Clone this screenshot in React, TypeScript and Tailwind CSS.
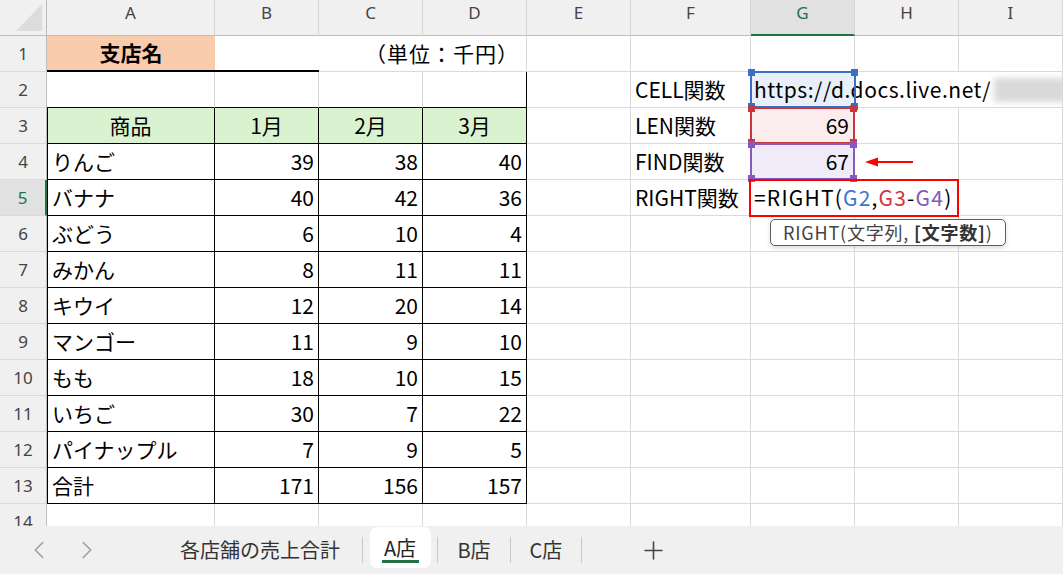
import { ChevronLeft, ChevronRight, Plus } from "lucide-react";

const CJK = "font-['Noto_Sans_CJK_JP',sans-serif]";
const HEAD = "font-['Noto_Sans','Noto_Sans_CJK_JP',sans-serif]";

const cell =
  "flex items-center whitespace-nowrap border-r border-b border-[#dadada] text-[21px] text-black";
const tbl = "border-r-black border-b-black";
const num = "justify-end pr-[4px]";

const fruits: [string, number, number, number][] = [
  ["りんご", 39, 38, 40],
  ["バナナ", 40, 42, 36],
  ["ぶどう", 6, 10, 4],
  ["みかん", 8, 11, 11],
  ["キウイ", 12, 20, 14],
  ["マンゴー", 11, 9, 10],
  ["もも", 18, 10, 15],
  ["いちご", 30, 7, 22],
  ["パイナップル", 7, 9, 5],
  ["合計", 171, 156, 157],
];

const RowHead = ({ n, active }: { n: number; active?: boolean }) => (
  <div
    className={
      active
        ? `${HEAD} flex items-center justify-center border-b border-r-2 border-b-[#dadada] border-r-[#217346] bg-[#e1e1e1] text-[17px] text-[#217346]`
        : `${HEAD} flex items-center justify-center border-b border-r border-b-[#dadada] border-r-[#bdbdbd] bg-[#f0f0f0] text-[17px] text-[#444]`
    }
  >
    {n}
  </div>
);

const RangeBox = ({ border, fill }: { border: string; fill: string }) => (
  <>
    <div className={`pointer-events-none absolute -inset-px border-2 ${border}`} />
    <span className={`absolute -left-[3px] -top-[3px] h-[7px] w-[7px] ${fill}`} />
    <span className={`absolute -right-[3px] -top-[3px] h-[7px] w-[7px] ${fill}`} />
    <span className={`absolute -bottom-[3px] -left-[3px] h-[7px] w-[7px] ${fill}`} />
    <span className={`absolute -bottom-[3px] -right-[3px] h-[7px] w-[7px] ${fill}`} />
  </>
);

const Sep = () => <div className="mt-[11px] h-[26px] w-px bg-[#c8c8c8]" />;

const Labels: Record<number, string> = {
  2: "CELL関数",
  3: "LEN関数",
  4: "FIND関数",
  5: "RIGHT関数",
};

function GCell({ row }: { row: number }) {
  if (row === 2)
    return (
      <div className={`${cell} relative border-r-0 bg-[#e9eff9] pl-[3px]`}>
        <span className="tracking-[0.55px]">https://d.docs.live.net/</span>
        <span className="ml-[3px] inline-block h-[24px] w-[72px] shrink-0 bg-[#d9d9d9] blur-[3px]" />
        <RangeBox border="border-[#3b6fc6]" fill="bg-[#3b6fc6]" />
      </div>
    );
  if (row === 3)
    return (
      <div className={`${cell} relative justify-end bg-[#fbeced] pr-[5px]`}>
        69
        <RangeBox border="border-[#c9363e]" fill="bg-[#c9363e]" />
      </div>
    );
  if (row === 4)
    return (
      <div className={`${cell} relative justify-end bg-[#efebf8] pr-[5px]`}>
        67
        <RangeBox border="border-[#8957c0]" fill="bg-[#8957c0]" />
      </div>
    );
  if (row === 5)
    return (
      <div className={`${cell} relative border-r-0 pl-[3px]`}>
        <span className="tracking-[1.2px]">
          =RIGHT(<span className="text-[#3b73cf]">G2</span>,
          <span className="text-[#d1343d]">G3</span>-
          <span className="text-[#8656c0]">G4</span>)
        </span>
        <div className="pointer-events-none absolute -left-[2px] -top-[1px] h-[38px] w-[210px] border-2 border-[#ff0000]" />
        <div className="absolute left-[19px] top-[39px] flex h-[27px] items-center rounded-[5px] border-[1.5px] border-[#5f5f5f] bg-white px-[12px] text-[18px] tracking-[0.8px] text-[#444] shadow-[0_2px_4px_rgba(0,0,0,0.15)]">
          RIGHT(文字列, <b className="ml-[5px] text-[#333]">[文字数]</b>)
        </div>
      </div>
    );
  return <div className={cell} />;
}

function HCell({ row }: { row: number }) {
  if (row === 2) return <div className={`${cell} border-r-0`} />;
  if (row === 4)
    return (
      <div className={`${cell} pl-[10px]`}>
        <svg width="48" height="12" viewBox="0 0 48 12">
          <path d="M10 6H48" stroke="#ff0000" strokeWidth="2" />
          <path d="M0 6L13 1.5V10.5Z" fill="#ff0000" />
        </svg>
      </div>
    );
  return <div className={cell} />;
}

function RightSide({ row }: { row: number }) {
  return (
    <>
      <div className={cell} />
      <div className={`${cell} pl-[4px]`}>{Labels[row] ?? ""}</div>
      <GCell row={row} />
      <HCell row={row} />
      <div className={cell} />
    </>
  );
}

export default function App() {
  return (
    <div className={`flex h-[574px] w-[1063px] flex-col overflow-hidden bg-white ${CJK}`}>
      <div className="h-[526px] overflow-hidden">
        <div className="grid grid-cols-[47px_168px_104px_104px_104px_104px_120px_104px_104px_104px] auto-rows-[36px]">
          {/* column headers */}
          <div className="flex items-end justify-end border-b border-r border-b-[#bdbdbd] border-r-[#bdbdbd] bg-[#f0f0f0] pb-[4px] pr-[4px]">
            <svg width="26" height="27" viewBox="0 0 26 27">
              <path d="M26 0V27H0Z" fill="#dcdcdc" />
            </svg>
          </div>
          {["A", "B", "C", "D", "E", "F", "G", "H", "I"].map((l) =>
            l === "G" ? (
              <div
                key={l}
                className={`${HEAD} flex items-center justify-center border-r border-b-2 border-r-[#d5d5d5] border-b-[#217346] bg-[#e1e1e1] pb-[8px] text-[17px] text-[#217346]`}
              >
                {l}
              </div>
            ) : (
              <div
                key={l}
                className={`${HEAD} flex items-center justify-center border-r border-b border-r-[#d5d5d5] border-b-[#bdbdbd] bg-[#f0f0f0] pb-[9px] text-[17px] text-[#444]`}
              >
                {l}
              </div>
            )
          )}

          {/* row 1 */}
          <RowHead n={1} />
          <div className={`${cell} justify-center border-r-0 border-b-2 border-b-black bg-[#f8cbad] font-bold`}>支店名</div>
          <div className={`${cell} border-r-0 border-b-2 border-b-black`} />
          <div className={`${cell} col-span-2 justify-end pr-[7px] tracking-[1px]`}>（単位：千円）</div>
          <div className={cell} />
          <div className={cell} />
          <div className={cell} />
          <div className={cell} />
          <div className={cell} />

          {/* row 2 */}
          <RowHead n={2} />
          <div className={`${cell} border-b-black`} />
          <div className={`${cell} border-b-black`} />
          <div className={`${cell} border-b-black`} />
          <div className={`${cell} border-b-black border-r-black`} />
          <RightSide row={2} />

          {/* row 3 */}
          <RowHead n={3} />
          <div className={`${cell} ${tbl} justify-center bg-[#daf2d0] shadow-[inset_1px_0_0_#000]`}>商品</div>
          {["1月", "2月", "3月"].map((m) => (
            <div key={m} className={`${cell} ${tbl} justify-center bg-[#daf2d0]`}>
              {m}
            </div>
          ))}
          <RightSide row={3} />

          {/* rows 4-13 */}
          {fruits.map(([name, a, b, c], i) => {
            const row = i + 4;
            return (
              <div key={name} className="contents">
                <RowHead n={row} active={row === 5} />
                <div className={`${cell} ${tbl} pl-[5px] shadow-[inset_1px_0_0_#000]`}>{name}</div>
                <div className={`${cell} ${tbl} ${num}`}>{a}</div>
                <div className={`${cell} ${tbl} ${num}`}>{b}</div>
                <div className={`${cell} ${tbl} ${num}`}>{c}</div>
                <RightSide row={row} />
              </div>
            );
          })}

          {/* row 14 */}
          <RowHead n={14} />
          {Array.from({ length: 9 }).map((_, i) => (
            <div key={i} className={cell} />
          ))}
        </div>
      </div>

      {/* sheet tabs */}
      <div className="flex h-[48px] items-start bg-[#f0f0f0] text-[20px] text-[#333]">
        <div className="flex h-full w-[160px] items-center gap-[18px] pl-[24px] text-[#a0a0a0]">
          <ChevronLeft size={30} strokeWidth={1.3} />
          <ChevronRight size={30} strokeWidth={1.3} />
        </div>
        <div className="flex h-full w-[202px] items-center pl-[20px]">各店舗の売上合計</div>
        <Sep />
        <div className="flex h-full w-[74px] justify-center pt-px">
          <div className="relative flex h-[41px] w-[61px] items-center justify-center rounded-[7px] bg-white text-[#222]">
            A店
            <span className="absolute bottom-[5px] left-[12px] h-[3px] w-[37px] bg-[#217346]" />
          </div>
        </div>
        <Sep />
        <div className="flex h-full w-[72px] items-center justify-center">B店</div>
        <Sep />
        <div className="flex h-full w-[70px] items-center justify-center">C店</div>
        <Sep />
        <div className="flex h-full w-[142px] items-center justify-center text-[#444]">
          <Plus size={29} strokeWidth={1.3} />
        </div>
      </div>
    </div>
  );
}
